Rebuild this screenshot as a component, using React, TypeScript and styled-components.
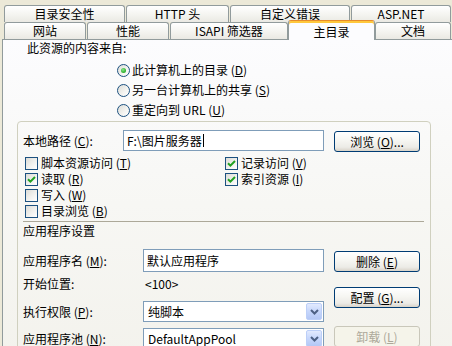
import React from "react";
import styled, { createGlobalStyle, css } from "styled-components";

const GlobalStyle = createGlobalStyle`
  html, body { margin: 0; padding: 0; }
  body {
    background: #ECE9D8;
    font-family: "Noto Sans CJK SC", "Noto Sans", sans-serif;
    font-size: 12px;
    color: #000;
  }
  * { box-sizing: border-box; }
`;

const Window = styled.div`
  width: 452px;
  height: 346px;
  overflow: hidden;
  background: #ECE9D8;
  padding-top: 5px;
  font-family: "Noto Sans CJK SC", "Noto Sans", sans-serif;
  font-size: 12px;
  line-height: 16px;
`;

const TabRow = styled.div<{ $z: number }>`
  display: flex;
  gap: 1px;
  padding-left: 4px;
  height: 17px;
  align-items: flex-end;
  position: relative;
  z-index: ${(p) => p.$z};
`;

const Tab = styled.div<{ $w: number; $active?: boolean }>`
  flex: none;
  width: ${(p) => p.$w}px;
  height: 17px;
  border: 1px solid #919b9c;
  border-bottom: none;
  border-radius: 3px 3px 0 0;
  background: linear-gradient(180deg, #ffffff 0%, #f4f4f0 55%, #eae9e3 100%);
  display: flex;
  align-items: center;
  justify-content: center;
  white-space: nowrap;
  line-height: 14px;
  ${(p) =>
    p.$active &&
    css`
      height: 20px;
      margin: 0 -1px -1px -1px;
      padding-top: 2px;
      background: #fcfcfe;
      border-top: 1px solid #e68b2c;
      box-shadow: inset 0 2px 0 #ffc83c;
      position: relative;
      z-index: 3;
    `}
`;

const Panel = styled.div`
  margin-left: 2px;
  width: 480px;
  height: 330px;
  border: 1px solid #919b9c;
  background: linear-gradient(180deg, #fcfcfe 0%, #f7f7f4 50%, #f3f2ec 100%);
  display: flex;
  flex-direction: column;
  align-items: flex-start;
`;

const Heading = styled.div`
  margin-left: 24px;
  height: 16px;
  line-height: 16px;
`;

const RadioList = styled.div`
  margin-left: 114px;
  margin-top: 4px;
  display: flex;
  flex-direction: column;
`;

const OptionRow = styled.label`
  display: flex;
  align-items: center;
  gap: 2px;
  height: 20px;
  white-space: nowrap;
`;

const RadioCircle = styled.span<{ $on?: boolean }>`
  flex: none;
  width: 13px;
  height: 13px;
  border-radius: 50%;
  border: 1px solid #1c5180;
  background: linear-gradient(135deg, #dcdcd7 0%, #f4f4f1 60%, #ffffff 100%);
  display: flex;
  align-items: center;
  justify-content: center;
  &::after {
    content: "";
    display: ${(p) => (p.$on ? "block" : "none")};
    width: 5px;
    height: 5px;
    border-radius: 50%;
    background: radial-gradient(circle at 40% 35%, #8ae68a 0%, #35b535 60%, #1f9a1f 100%);
  }
`;

const GroupBox = styled.div`
  margin-left: 14px;
  margin-top: 1px;
  width: 414px;
  height: 280px;
  border: 1px solid #d0d0bf;
  border-radius: 4px;
  padding: 0 5px;
  display: flex;
  flex-direction: column;
`;

const PathRow = styled.div`
  margin-top: 8px;
  height: 22px;
  display: flex;
  align-items: flex-start;
`;

const FieldLabel = styled.div<{ $w: number; $h: number }>`
  flex: none;
  width: ${(p) => p.$w}px;
  height: ${(p) => p.$h}px;
  line-height: ${(p) => p.$h}px;
  white-space: nowrap;
`;

const TextBox = styled.div<{ $w: number; $h: number; $pl: number }>`
  flex: none;
  width: ${(p) => p.$w}px;
  height: ${(p) => p.$h}px;
  border: 1px solid #7f9db9;
  background: #ffffff;
  display: flex;
  align-items: center;
  padding-left: ${(p) => p.$pl}px;
  white-space: nowrap;
`;

const Caret = styled.span`
  display: inline-block;
  width: 1px;
  height: 13px;
  background: #000;
  margin-left: 1px;
`;

const XpButton = styled.button<{ $mt: number; $ml?: number }>`
  flex: none;
  width: 86px;
  height: 21px;
  margin-top: ${(p) => p.$mt}px;
  margin-left: ${(p) => p.$ml ?? 0}px;
  padding: 0;
  border: 1px solid #003c74;
  border-radius: 3px;
  background: linear-gradient(180deg, #ffffff 0%, #f6f6f2 45%, #ecebe6 80%, #d8d3c9 100%);
  font-family: inherit;
  font-size: 12px;
  line-height: 16px;
  color: #000;
  white-space: nowrap;
  &:disabled {
    border-color: #c9c7ba;
    background: #f5f4ea;
    color: #aca899;
  }
`;

const CheckGrid = styled.div`
  margin-top: 3px;
  padding-left: 2px;
  display: grid;
  grid-template-columns: 200px auto;
  grid-template-rows: repeat(4, 16px);
  grid-auto-flow: column;
`;

const CheckRow = styled.label`
  display: flex;
  align-items: center;
  gap: 3px;
  height: 16px;
  white-space: nowrap;
`;

const CheckBoxFace = styled.span`
  flex: none;
  width: 13px;
  height: 13px;
  border: 1px solid #1c5180;
  background: linear-gradient(135deg, #dcdcd7 0%, #f1f1ee 55%, #ffffff 100%);
  display: flex;
  align-items: center;
  justify-content: center;
`;

const Separator = styled.div`
  margin-top: 2px;
  height: 1px;
  width: 401px;
  background: #aca899;
`;

const SectionTitle = styled.div`
  margin-top: 1px;
  height: 16px;
  line-height: 16px;
`;

const AppArea = styled.div`
  display: flex;
  align-items: flex-start;
`;

const LeftCol = styled.div`
  width: 301px;
  display: flex;
  flex-direction: column;
`;

const RightCol = styled.div`
  margin-left: 10px;
  display: flex;
  flex-direction: column;
`;

const FieldRow = styled.div<{ $mt: number; $h: number }>`
  margin-top: ${(p) => p.$mt}px;
  height: ${(p) => p.$h}px;
  display: flex;
  align-items: center;
`;

const Value = styled.div`
  padding-left: 2px;
  white-space: nowrap;
`;

const ComboBox = styled.div`
  flex: none;
  width: 181px;
  height: 21px;
  border: 1px solid #7f9db9;
  background: #ffffff;
  display: flex;
  align-items: center;
  justify-content: space-between;
  padding-left: 4px;
  white-space: nowrap;
`;

const ComboArrow = styled.span`
  flex: none;
  width: 16px;
  height: 17px;
  margin-right: 1px;
  border: 1px solid #bccff8;
  border-radius: 2px;
  background: linear-gradient(180deg, #e2eafe 0%, #c8d8fc 45%, #b4c8f6 100%);
  display: flex;
  align-items: center;
  justify-content: center;
`;

const Radio = ({ on, children }: { on?: boolean; children: React.ReactNode }) => (
  <OptionRow>
    <RadioCircle $on={on} />
    <span>{children}</span>
  </OptionRow>
);

const Check = ({ on, children }: { on?: boolean; children: React.ReactNode }) => (
  <CheckRow>
    <CheckBoxFace>
      {on && (
        <svg width="9" height="9" viewBox="0 0 9 9">
          <polyline points="1,4.2 3.4,6.6 8,2" fill="none" stroke="#21a121" strokeWidth="2" />
        </svg>
      )}
    </CheckBoxFace>
    <span>{children}</span>
  </CheckRow>
);

const Arrow = () => (
  <ComboArrow>
    <svg width="9" height="6" viewBox="0 0 9 6">
      <polyline points="1,1 4.5,4.5 8,1" fill="none" stroke="#4d6185" strokeWidth="2" />
    </svg>
  </ComboArrow>
);

export default function App() {
  return (
    <>
      <GlobalStyle />
      <Window>
        <TabRow $z={1}>
          <Tab $w={121}>目录安全性</Tab>
          <Tab $w={103}>HTTP 头</Tab>
          <Tab $w={120}>自定义错误</Tab>
          <Tab $w={100}>ASP.NET</Tab>
        </TabRow>
        <TabRow $z={2}>
          <Tab $w={82}>网站</Tab>
          <Tab $w={82}>性能</Tab>
          <Tab $w={118}>ISAPI 筛选器</Tab>
          <Tab $w={87} $active>
            主目录
          </Tab>
          <Tab $w={76}>文档</Tab>
        </TabRow>
        <Panel>
          <Heading>此资源的内容来自:</Heading>
          <RadioList>
            <Radio on>
              此计算机上的目录 (<u>D</u>)
            </Radio>
            <Radio>
              另一台计算机上的共享 (<u>S</u>)
            </Radio>
            <Radio>
              重定向到 URL (<u>U</u>)
            </Radio>
          </RadioList>
          <GroupBox>
            <PathRow>
              <FieldLabel $w={100} $h={21}>
                本地路径 (<u>C</u>):
              </FieldLabel>
              <TextBox $w={201} $h={21} $pl={3}>
                F:\图片服务器
                <Caret />
              </TextBox>
              <XpButton $mt={1} $ml={10}>
                浏览 (<u>O</u>)...
              </XpButton>
            </PathRow>
            <CheckGrid>
              <Check>
                脚本资源访问 (<u>T</u>)
              </Check>
              <Check on>
                读取 (<u>R</u>)
              </Check>
              <Check>
                写入 (<u>W</u>)
              </Check>
              <Check>
                目录浏览 (<u>B</u>)
              </Check>
              <Check on>
                记录访问 (<u>V</u>)
              </Check>
              <Check on>
                索引资源 (<u>I</u>)
              </Check>
            </CheckGrid>
            <Separator />
            <SectionTitle>应用程序设置</SectionTitle>
            <AppArea>
              <LeftCol>
                <FieldRow $mt={10} $h={23}>
                  <FieldLabel $w={120} $h={23}>
                    应用程序名 (<u>M</u>):
                  </FieldLabel>
                  <TextBox $w={181} $h={23} $pl={3}>
                    默认应用程序
                  </TextBox>
                </FieldRow>
                <FieldRow $mt={4} $h={16}>
                  <FieldLabel $w={120} $h={16}>
                    开始位置:
                  </FieldLabel>
                  <Value>&lt;100&gt;</Value>
                </FieldRow>
                <FieldRow $mt={9} $h={21}>
                  <FieldLabel $w={120} $h={21}>
                    执行权限 (<u>P</u>):
                  </FieldLabel>
                  <ComboBox>
                    <span>纯脚本</span>
                    <Arrow />
                  </ComboBox>
                </FieldRow>
                <FieldRow $mt={6} $h={21}>
                  <FieldLabel $w={120} $h={21}>
                    应用程序池 (<u>N</u>):
                  </FieldLabel>
                  <ComboBox>
                    <span>DefaultAppPool</span>
                    <Arrow />
                  </ComboBox>
                </FieldRow>
              </LeftCol>
              <RightCol>
                <XpButton $mt={12}>
                  删除 (<u>E</u>)
                </XpButton>
                <XpButton $mt={15}>
                  配置 (<u>G</u>)...
                </XpButton>
                <XpButton $mt={18} disabled>
                  卸载 (<u>L</u>)
                </XpButton>
              </RightCol>
            </AppArea>
          </GroupBox>
        </Panel>
      </Window>
    </>
  );
}
